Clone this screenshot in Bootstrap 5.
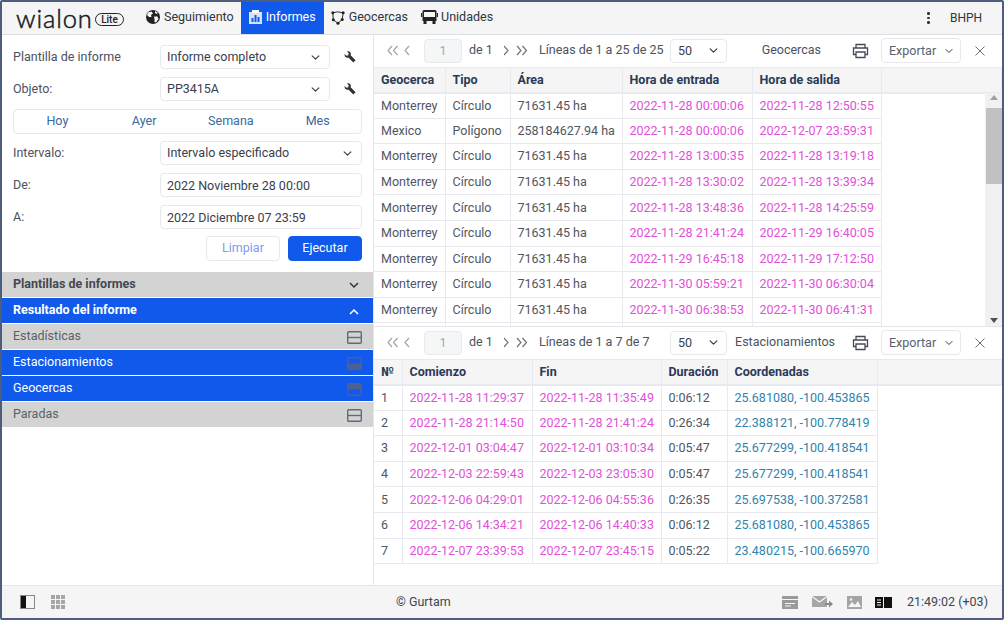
<!doctype html>
<html lang="es">
<head>
  <meta charset="UTF-8">
  <meta name="viewport" content="width=device-width, initial-scale=1">
  <title>Wialon Lite - Informes</title>
  <link href="https://cdn.jsdelivr.net/npm/bootstrap@5.3.3/dist/css/bootstrap.min.css" rel="stylesheet">
  <style>
    html, body { height: 100%; overflow: hidden; }
    body { font-family: Roboto, "Liberation Sans", sans-serif; font-size: 12.5px; color: #4b5260; background: #fff; }
    .app-frame { height: 620px; border: solid #4d5d7c; border-width: 2px; border-radius: 2px; display: flex; flex-direction: column; }

    .top-bar { height: 33px; background: #f5f5f5; border-bottom: 1px solid #dcdfe4; flex: none; padding: 0; }
    .logo-word { font-family: Lato, sans-serif; font-size: 25.5px; font-weight: 300; letter-spacing: .9px; color: #16181c; line-height: 30px; width: 76px; margin-left: 14px; -webkit-text-stroke: .5px #16181c; }
    .logo-lite { border: 1.5px solid #222; border-radius: 8px; font-size: 10px; font-weight: 500; line-height: 11px; height: 13px; width: 29px; text-align: center; color: #222; margin: 3px 0 0 3px; }
    .tab-strip { margin-left: 14px; }
    .tab-link { height: 32px; display: flex; align-items: center; gap: 3px; padding: 0 7px 2px 7px; color: #2f3540; font-size: 12.5px; text-decoration: none; }
    .tab-link.active-tab { background: #1059ea; color: #fff; padding-right: 8px; }
    .tab-link.tab-tight { padding-left: 6px; }
    .tab-link.tab-bus { padding-left: 6px; }
    .user-name { font-size: 12px; color: #2f3540; width: 52px; }
    .dots { width: 3px; margin-right: 20px; display: flex; flex-direction: column; gap: 2px; }
    .dots i { width: 2.5px; height: 2.5px; background: #333; border-radius: 50%; display: block; }

    .main-area { flex: 1; min-height: 0; display: flex; }
    .side-panel { width: 372px; flex: none; border-right: 1px solid #e4e6ea; }
    .side-form { height: 237px; padding: 10px 11px 0 11px; }
    .side-row { height: 24px; margin-bottom: 8px; display: flex; align-items: center; }
    .side-label { width: 147px; flex: none; padding-top: 1px; }
    .side-select.form-select, .side-input.form-control { height: 24px; min-height: 24px; font-size: 12.5px; color: #39404d; padding: 0 6px; border: 1px solid #e6e8ec; border-radius: 4px; line-height: 22px; background-size: 11px 9px; background-position: right 8px center; }
    .side-input.form-control { width: 202px; }
    .w-170 { width: 170px; }
    .w-207 { width: 207px; }
    .wrench { margin-left: 14px; }
    .period-group { height: 25px; border: 1px solid #e6e8ec; border-radius: 4px; display: grid; grid-template-columns: repeat(4, 1fr); margin-bottom: 7px; }
    .period-group span { text-align: center; color: #39689e; line-height: 22px; }
    .action-row { justify-content: flex-end; gap: 8px; height: 25px; display: flex; margin-top: -1px; }
    .action-btn { width: 74px; height: 25px; font-size: 12.5px; padding: 0; border-radius: 4px; border: 1px solid #e6e8ec; color: #7c9cf2; background: #fff; }
    .action-btn.run-btn { background: #1059ea; border-color: #1059ea; color: #fff; }

    .acc-row { height: 25px; margin-bottom: 1px; background: #d3d3d3; display: flex; align-items: center; justify-content: space-between; padding: 0 11px 0 11px; color: #5b5f66; }
    .acc-row.acc-head { font-weight: 700; color: #45484e; }
    .acc-row.acc-on { background: #1059ea; color: #fff; }
    .acc-row svg { margin-top: 1px; }
    .acc-row.acc-head svg { margin-right: 3px; }

    .right-panel { flex: 1; min-width: 0; display: flex; flex-direction: column; }
    .report-pane { position: relative; overflow: hidden; flex: none; }
    .pane-top { height: 291px; }
    .pane-bottom { flex: 1; border-top: 1px solid #e4e6ea; }
    .pane-tools { height: 32px; display: flex; align-items: center; padding-left: 13px; padding-bottom: 1px; font-size: 12.5px; color: #4b5260; }
    .pager-prev { width: 37px; flex: none; }
    .pager-next { width: 35px; flex: none; }
    .page-box { width: 38px; height: 24px; background: #f5f6f7; border: 1px solid #e8e9ec; border-radius: 4px; color: #a4a8ae; text-align: center; line-height: 22px; }
    .page-of { margin-left: 7px; width: 35px; flex: none; }
    .lines-text { width: 131px; flex: none; }
    .pane-title { text-align: right; flex: none; margin-right: auto; }
    .title-geo { width: 94px; }
    .title-stops { width: 108px; }
    .size-select.form-select { width: 57px; height: 24px; min-height: 24px; font-size: 12.5px; padding: 0 6px 0 7px; border: 1px solid #e6e8ec; border-radius: 4px; color: #39404d; background-size: 11px 9px; background-position: right 7px center; line-height: 22px; }
    .export-select.form-select { width: 80px; height: 25px; min-height: 25px; margin-left: 12px; font-size: 12.5px; padding: 0 6px 0 7px; border: 1px solid #e6e8ec; border-radius: 4px; color: #5b616c; background-size: 10px 8px; background-position: right 6px center; line-height: 23px; }
    .close-x { margin: 0 17px 0 14px; }
    .report-grid.table { margin: 0; width: 100%; table-layout: fixed; border-collapse: collapse; font-size: 12.5px; }
    .report-grid.table > * > tr > * { padding: 0 7px; height: 25.6px; line-height: 14px; border: 1px solid #e8eaef; border-width: 0 1px 1px 0; color: #4f5662; white-space: nowrap; vertical-align: middle; background: transparent; box-shadow: none; }
    .report-grid.table > thead > tr > th { background: #f5f5f5; color: #2b3a57; font-weight: 700; height: 25px; border-bottom: 2px solid #e8eaef; border-top: 1px solid #e8eaef; }
    .report-grid.table > tbody > tr > td.filler { border: 0; }
    .report-grid.table > tbody > tr > td.stamp { color: #e24fd9; }
    .report-grid.table > tbody > tr > td.coords { color: #2f84ab; }
    .col-a { width: 71px; } .col-b { width: 65px; } .col-c { width: 112px; } .col-d { width: 130px; } .col-e { width: 129px; }
    .col-n { width: 28px; } .col-s { width: 130px; } .col-f { width: 129px; } .col-t { width: 66px; } .col-p { width: 150px; }
    .scroll-rail { position: absolute; right: 0; top: 58px; bottom: 0; width: 17px; background: #f1f1f1; }
    .scroll-rail::before, .scroll-rail::after { content: ""; position: absolute; left: 5px; border: 4px solid transparent; }
    .scroll-rail::before { top: 2px; border-bottom: 5px solid #a0a0a0; border-top: 0; }
    .scroll-rail::after { bottom: 3px; border-top: 5px solid #505050; border-bottom: 0; }
    .scroll-thumb { position: absolute; left: 1px; right: 0; top: 15px; height: 76px; background: #c1c1c1; }

    .foot-bar { height: 33px; flex: none; background: #f5f5f5; border-top: 1px solid #e4e6ea; display: flex; align-items: center; padding-left: 18px; padding-right: 14px; color: #3f4550; font-size: 12.5px; }
    .foot-copy { margin-left: 331px; }
    .foot-gap-14 { margin-left: 14px; }
    .foot-gap-13 { margin-left: 13px; }
    .foot-time { margin-left: 15px; }
  </style>
</head>
<body>
  <div class="app-frame">
    <nav class="top-bar d-flex align-items-center">
      <div class="logo-word">wialon</div>
      <div class="logo-lite">Lite</div>
      <div class="d-flex tab-strip">
        <a class="tab-link" href="#">
          <svg width="16" height="16" viewBox="0 0 16 16"><circle cx="8" cy="8" r="7" fill="#222"/><path d="M3 3.500 6.500 2.500 8 4.500 6 6 6.500 8 4 8 2 6ZM9 7.500 12.500 7.500 13.500 10 11 13.500 9.500 13 9.500 10ZM10 2 13 4 11.500 5 10 4Z" fill="#f5f5f5"/></svg>
          Seguimiento
        </a>
        <a class="tab-link active-tab" href="#">
          <svg width="15" height="16" viewBox="0 0 15 16"><path d="M1 3H14V15H1Z" fill="#d7e3fb"/><path d="M4 1H11V4H4Z" fill="#fff"/><path d="M3.500 9H5.500V13H3.500ZM6.500 6H8.500V13H6.500ZM9.500 8H11.500V13H9.500Z" fill="#1059ea"/></svg>
          Informes
        </a>
        <a class="tab-link tab-tight" href="#">
          <svg width="16" height="17" viewBox="0 0 17 17" fill="none" stroke="#222" stroke-width="1"><path d="M3 3.500 8 2.500 14 3.500 13 10.500 8.500 14.500 3.500 11Z"/><g fill="#222" stroke="none"><circle cx="3" cy="3.500" r="1.600"/><circle cx="14" cy="3.500" r="1.600"/><circle cx="13" cy="10.500" r="1.600"/><circle cx="8.500" cy="14.500" r="1.600"/><circle cx="3.500" cy="11" r="1.600"/></g></svg>
          Geocercas
        </a>
        <a class="tab-link tab-bus" href="#">
          <svg width="17" height="16" viewBox="0 0 17 16"><path d="M3 1H14Q15.500 1 15.500 2.500V12H1.500V2.500Q1.500 1 3 1Z" fill="#222"/><path d="M3 3H14V8H3Z" fill="#f5f5f5"/><path d="M2.500 12H5.500V15H2.500ZM11.500 12H14.500V15H11.500Z" fill="#222"/><path d="M0 4H1.200V8H0ZM15.800 4H17V8H15.800Z" fill="#222"/></svg>
          Unidades
        </a>
      </div>
      <div class="ms-auto d-flex align-items-center">
        <div class="dots"><i></i><i></i><i></i></div>
        <div class="user-name">BHPH</div>
      </div>
    </nav>

    <div class="main-area">
      <aside class="side-panel">
        <form class="side-form">
          <div class="side-row">
            <label class="side-label">Plantilla de informe</label>
            <select class="form-select side-select w-170"><option>Informe completo</option></select>
            <svg class="wrench" width="12" height="12" viewBox="0 0 12 12"><path d="M.6 3 2.300 4.700 4.300 4.300 4.700 2.300 3 .6C4.800 -.2 6.800 .8 6.900 2.800 6.900 3.400 6.800 3.800 6.600 4.300L11.600 9.300 9.300 11.600 4.300 6.600C2.300 7.400 .1 5.500 .6 3Z" fill="#333"/></svg>
          </div>
          <div class="side-row">
            <label class="side-label">Objeto:</label>
            <select class="form-select side-select w-170"><option>PP3415A</option></select>
            <svg class="wrench" width="12" height="12" viewBox="0 0 12 12"><path d="M.6 3 2.300 4.700 4.300 4.300 4.700 2.300 3 .6C4.800 -.2 6.800 .8 6.900 2.800 6.900 3.400 6.800 3.800 6.600 4.300L11.600 9.300 9.300 11.600 4.300 6.600C2.300 7.400 .1 5.500 .6 3Z" fill="#333"/></svg>
          </div>
          <div class="period-group">
            <span>Hoy</span><span>Ayer</span><span>Semana</span><span>Mes</span>
          </div>
          <div class="side-row">
            <label class="side-label">Intervalo:</label>
            <select class="form-select side-select w-207"><option>Intervalo especificado</option></select>
          </div>
          <div class="side-row">
            <label class="side-label">De:</label>
            <input class="form-control side-input" value="2022 Noviembre 28 00:00">
          </div>
          <div class="side-row">
            <label class="side-label">A:</label>
            <input class="form-control side-input" value="2022 Diciembre 07 23:59">
          </div>
          <div class="action-row">
            <button type="button" class="btn action-btn">Limpiar</button>
            <button type="button" class="btn action-btn run-btn">Ejecutar</button>
          </div>
        </form>

        <div class="acc-row acc-head">Plantillas de informes
          <svg width="10" height="7" viewBox="0 0 10 7" fill="none" stroke="#333" stroke-width="1.500"><path d="M1 1 5 5 9 1"/></svg>
        </div>
        <div class="acc-row acc-head acc-on">Resultado del informe
          <svg width="10" height="7" viewBox="0 0 10 7" fill="none" stroke="#fff" stroke-width="1.500"><path d="M1 6 5 2 9 6"/></svg>
        </div>
        <div class="acc-row">Estadísticas
          <svg width="15" height="13" viewBox="0 0 15 13" fill="none" stroke="#626a7e" stroke-width="1.400"><rect x=".7" y=".7" width="13.600" height="11.600" rx="1"/><path d="M.7 6.500H14.300"/></svg>
        </div>
        <div class="acc-row acc-on">Estacionamientos
          <svg width="15" height="13" viewBox="0 0 15 13"><rect x=".7" y=".7" width="13.600" height="11.600" rx="1" fill="none" stroke="#4e5f90" stroke-width="1.400"/><path d="M1 6.500H14V12H1Z" fill="#4e5f90"/></svg>
        </div>
        <div class="acc-row acc-on">Geocercas
          <svg width="15" height="13" viewBox="0 0 15 13"><rect x=".7" y=".7" width="13.600" height="11.600" rx="1" fill="none" stroke="#4e5f90" stroke-width="1.400"/><path d="M1 1H14V6.500H1Z" fill="#4e5f90"/></svg>
        </div>
        <div class="acc-row">Paradas
          <svg width="15" height="13" viewBox="0 0 15 13" fill="none" stroke="#626a7e" stroke-width="1.400"><rect x=".7" y=".7" width="13.600" height="11.600" rx="1"/><path d="M.7 6.500H14.300"/></svg>
        </div>
      </aside>

      <section class="right-panel">
        <div class="report-pane pane-top">
          <div class="pane-tools">
            <svg class="pager-prev" height="11" viewBox="0 0 37 11" fill="none" stroke="#a0a4ab" stroke-width="1.200"><path d="M5 1 1 5.500 5 10M10.500 1 6.500 5.500 10.500 10M22 1 18 5.500 22 10"/></svg>
            <span class="page-box">1</span>
            <span class="page-of">de 1</span>
            <svg class="pager-next" height="11" viewBox="0 0 35 11" fill="none" stroke="#6f747c" stroke-width="1.200"><path d="M0 1 4 5.500 0 10M13 1 17 5.500 13 10M18.500 1 22.500 5.500 18.500 10"/></svg>
            <span class="lines-text">Líneas de 1 a 25 de 25</span>
            <select class="form-select size-select"><option>50</option></select>
            <span class="pane-title title-geo">Geocercas</span>
            <svg width="17" height="16" viewBox="0 0 17 16" fill="none" stroke="#444b58" stroke-width="1.300"><path d="M4 5V1.500H13V5M4 11.500H1.500V5H15.500V11.500H13"/><path d="M4 9H13V14.500H4Z"/></svg>
            <select class="form-select export-select"><option>Exportar</option></select>
            <svg class="close-x" width="10" height="10" viewBox="0 0 10 10" stroke="#6c727c" stroke-width="1"><path d="M.5.500 9.500 9.500M9.500.500.500 9.500"/></svg>
          </div>
          <table class="table report-grid">
            <colgroup><col class="col-a"><col class="col-b"><col class="col-c"><col class="col-d"><col class="col-e"><col></colgroup>
            <thead><tr><th>Geocerca</th><th>Tipo</th><th>Área</th><th>Hora de entrada</th><th>Hora de salida</th><th></th></tr></thead>
            <tbody>
              <tr><td>Monterrey</td><td>Círculo</td><td>71631.45 ha</td><td class="stamp">2022-11-28 00:00:06</td><td class="stamp">2022-11-28 12:50:55</td><td class="filler"></td></tr>
              <tr><td>Mexico</td><td>Polígono</td><td>258184627.94 ha</td><td class="stamp">2022-11-28 00:00:06</td><td class="stamp">2022-12-07 23:59:31</td><td class="filler"></td></tr>
              <tr><td>Monterrey</td><td>Círculo</td><td>71631.45 ha</td><td class="stamp">2022-11-28 13:00:35</td><td class="stamp">2022-11-28 13:19:18</td><td class="filler"></td></tr>
              <tr><td>Monterrey</td><td>Círculo</td><td>71631.45 ha</td><td class="stamp">2022-11-28 13:30:02</td><td class="stamp">2022-11-28 13:39:34</td><td class="filler"></td></tr>
              <tr><td>Monterrey</td><td>Círculo</td><td>71631.45 ha</td><td class="stamp">2022-11-28 13:48:36</td><td class="stamp">2022-11-28 14:25:59</td><td class="filler"></td></tr>
              <tr><td>Monterrey</td><td>Círculo</td><td>71631.45 ha</td><td class="stamp">2022-11-28 21:41:24</td><td class="stamp">2022-11-29 16:40:05</td><td class="filler"></td></tr>
              <tr><td>Monterrey</td><td>Círculo</td><td>71631.45 ha</td><td class="stamp">2022-11-29 16:45:18</td><td class="stamp">2022-11-29 17:12:50</td><td class="filler"></td></tr>
              <tr><td>Monterrey</td><td>Círculo</td><td>71631.45 ha</td><td class="stamp">2022-11-30 05:59:21</td><td class="stamp">2022-11-30 06:30:04</td><td class="filler"></td></tr>
              <tr><td>Monterrey</td><td>Círculo</td><td>71631.45 ha</td><td class="stamp">2022-11-30 06:38:53</td><td class="stamp">2022-11-30 06:41:31</td><td class="filler"></td></tr>
              <tr><td>&nbsp;</td><td></td><td></td><td></td><td></td><td class="filler"></td></tr>
            </tbody>
          </table>
          <div class="scroll-rail"><div class="scroll-thumb"></div></div>
        </div>

        <div class="report-pane pane-bottom">
          <div class="pane-tools">
            <svg class="pager-prev" height="11" viewBox="0 0 37 11" fill="none" stroke="#a0a4ab" stroke-width="1.200"><path d="M5 1 1 5.500 5 10M10.500 1 6.500 5.500 10.500 10M22 1 18 5.500 22 10"/></svg>
            <span class="page-box">1</span>
            <span class="page-of">de 1</span>
            <svg class="pager-next" height="11" viewBox="0 0 35 11" fill="none" stroke="#6f747c" stroke-width="1.200"><path d="M0 1 4 5.500 0 10M13 1 17 5.500 13 10M18.500 1 22.500 5.500 18.500 10"/></svg>
            <span class="lines-text">Líneas de 1 a 7 de 7</span>
            <select class="form-select size-select"><option>50</option></select>
            <span class="pane-title title-stops">Estacionamientos</span>
            <svg width="17" height="16" viewBox="0 0 17 16" fill="none" stroke="#444b58" stroke-width="1.300"><path d="M4 5V1.500H13V5M4 11.500H1.500V5H15.500V11.500H13"/><path d="M4 9H13V14.500H4Z"/></svg>
            <select class="form-select export-select"><option>Exportar</option></select>
            <svg class="close-x" width="10" height="10" viewBox="0 0 10 10" stroke="#6c727c" stroke-width="1"><path d="M.5.500 9.500 9.500M9.500.500.500 9.500"/></svg>
          </div>
          <table class="table report-grid">
            <colgroup><col class="col-n"><col class="col-s"><col class="col-f"><col class="col-t"><col class="col-p"><col></colgroup>
            <thead><tr><th>№</th><th>Comienzo</th><th>Fin</th><th>Duración</th><th>Coordenadas</th><th></th></tr></thead>
            <tbody>
              <tr><td>1</td><td class="stamp">2022-11-28 11:29:37</td><td class="stamp">2022-11-28 11:35:49</td><td>0:06:12</td><td class="coords">25.681080, -100.453865</td><td class="filler"></td></tr>
              <tr><td>2</td><td class="stamp">2022-11-28 21:14:50</td><td class="stamp">2022-11-28 21:41:24</td><td>0:26:34</td><td class="coords">22.388121, -100.778419</td><td class="filler"></td></tr>
              <tr><td>3</td><td class="stamp">2022-12-01 03:04:47</td><td class="stamp">2022-12-01 03:10:34</td><td>0:05:47</td><td class="coords">25.677299, -100.418541</td><td class="filler"></td></tr>
              <tr><td>4</td><td class="stamp">2022-12-03 22:59:43</td><td class="stamp">2022-12-03 23:05:30</td><td>0:05:47</td><td class="coords">25.677299, -100.418541</td><td class="filler"></td></tr>
              <tr><td>5</td><td class="stamp">2022-12-06 04:29:01</td><td class="stamp">2022-12-06 04:55:36</td><td>0:26:35</td><td class="coords">25.697538, -100.372581</td><td class="filler"></td></tr>
              <tr><td>6</td><td class="stamp">2022-12-06 14:34:21</td><td class="stamp">2022-12-06 14:40:33</td><td>0:06:12</td><td class="coords">25.681080, -100.453865</td><td class="filler"></td></tr>
              <tr><td>7</td><td class="stamp">2022-12-07 23:39:53</td><td class="stamp">2022-12-07 23:45:15</td><td>0:05:22</td><td class="coords">23.480215, -100.665970</td><td class="filler"></td></tr>
            </tbody>
          </table>
        </div>
      </section>
    </div>

    <footer class="foot-bar">
      <svg width="15" height="14" viewBox="0 0 15 14"><rect x=".5" y=".5" width="14" height="13" fill="#f5f5f5" stroke="#888"/><rect x="1" y="1" width="5" height="12" fill="#111"/></svg>
      <svg class="ms-3" width="14" height="14" viewBox="0 0 14 14" fill="#a5a5a5"><path d="M0 0H4V4H0ZM5 0H9V4H5ZM10 0H14V4H10ZM0 5H4V9H0ZM5 5H9V9H5ZM10 5H14V9H10ZM0 10H4V14H0ZM5 10H9V14H5ZM10 10H14V14H10Z"/></svg>
      <span class="foot-copy">© Gurtam</span>
      <div class="ms-auto d-flex align-items-center">
        <svg width="16" height="13" viewBox="0 0 16 13"><path d="M0 0H16V13H0Z" fill="#9a9a9a"/><path d="M0 3H16V4H0Z" fill="#f5f5f5"/><path d="M3 7H13V8H3ZM3 9.500H9V10.500H3Z" fill="#f5f5f5"/></svg>
        <svg class="foot-gap-14" width="21" height="12" viewBox="0 0 21 12"><path d="M0 0H15V11H0Z" fill="#a5a5a5"/><path d="M0 .500 7.500 6 15 .500" fill="none" stroke="#f5f5f5" stroke-width="1.300"/><path d="M13 7H17V4.500L21 8 17 11.500V9H13Z" fill="#8a8a8a"/></svg>
        <svg class="foot-gap-14" width="15" height="13" viewBox="0 0 15 13"><path d="M0 0H15V13H0Z" fill="#a5a5a5"/><path d="M1 11 5 6 8 9 11 5 14 11Z" fill="#f5f5f5"/><circle cx="4" cy="3.500" r="1.300" fill="#f5f5f5"/></svg>
        <svg class="foot-gap-13" width="17" height="11" viewBox="0 0 17 11"><path d="M0 0H8V11H0ZM9 0H17V11H9Z" fill="#111"/><path d="M2 2.500H6V3.500H2ZM2 5H6V6H2ZM2 7.500H6V8.500H2Z" fill="#f5f5f5"/></svg>
        <span class="foot-time">21:49:02 (+03)</span>
      </div>
    </footer>
  </div>
  <script src="https://cdn.jsdelivr.net/npm/bootstrap@5.3.3/dist/js/bootstrap.bundle.min.js"></script>
</body>
</html>
